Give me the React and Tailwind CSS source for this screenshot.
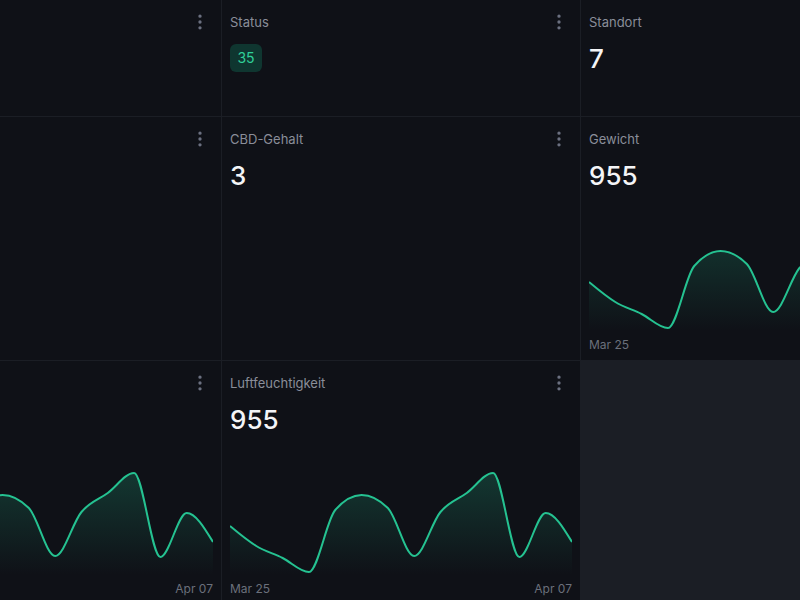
import { EllipsisVertical } from "lucide-react";

const W = 342;
const H = 145;
const BASE = 139;

// same series in every chart, y already in chart pixels
const series = [90, 110, 122, 136, 74, 59, 72, 120, 76, 57, 37, 121, 77, 106];

function monotonePath(ys) {
  const n = ys.length;
  const h = W / (n - 1);
  const xs = ys.map((_, i) => i * h);
  const s = [];
  for (let i = 0; i < n - 1; i++) s.push((ys[i + 1] - ys[i]) / h);
  const m = new Array(n).fill(0);
  for (let i = 1; i < n - 1; i++) {
    const s0 = s[i - 1];
    const s1 = s[i];
    const p = (s0 + s1) / 2;
    m[i] = (Math.sign(s0) + Math.sign(s1)) * Math.min(Math.abs(s0), Math.abs(s1), 0.5 * Math.abs(p));
  }
  m[0] = (3 * s[0] - m[1]) / 2;
  m[n - 1] = (3 * s[n - 2] - m[n - 2]) / 2;
  let d = `M${xs[0]},${ys[0]}`;
  for (let i = 0; i < n - 1; i++) {
    const dx = h / 3;
    d += ` C${xs[i] + dx},${ys[i] + m[i] * dx} ${xs[i + 1] - dx},${ys[i + 1] - m[i + 1] * dx} ${xs[i + 1]},${ys[i + 1]}`;
  }
  return d;
}

const linePath = monotonePath(series);
const areaPath = `${linePath} L${W},${BASE} L0,${BASE} Z`;

function Chart({ id, from = "Mar 25", to = "Apr 07" }) {
  return (
    <div className="flex flex-1 flex-col">
      <svg width={W} height={H} viewBox={`0 0 ${W} ${H}`} className="block">
        <defs>
          <linearGradient id={id} x1="0" y1="0" x2="0" y2="1">
            <stop offset="0%" stopColor="#22c08e" stopOpacity="0.22" />
            <stop offset="100%" stopColor="#22c08e" stopOpacity="0" />
          </linearGradient>
        </defs>
        <path d={areaPath} fill={`url(#${id})`} />
        <path d={linePath} fill="none" stroke="#25c291" strokeWidth="2" strokeLinejoin="round" />
      </svg>
      <div className="flex h-4 items-center justify-between text-xs text-[#6b707b]">
        <span>{from}</span>
        <span>{to}</span>
      </div>
    </div>
  );
}

function Widget({ title, value, badge, chart, id, from, to }) {
  return (
    <div className="flex flex-col bg-[#0f1117] px-2 pt-3 pb-[7px]">
      <div className="flex h-5 items-center justify-between">
        <span className="text-[13px] leading-5 text-[#8a8e99]">{title}</span>
        <button className="mr-[3px] flex h-5 w-5 items-center justify-center text-[#6b7080]">
          <EllipsisVertical size={20} strokeWidth={2} />
        </button>
      </div>
      {badge ? (
        <div className="mt-3">
          <span className="inline-flex h-7 w-8 items-center justify-center rounded-md bg-[#0f3630] text-sm text-[#2fcf98]">
            {badge}
          </span>
        </div>
      ) : (
        <div className="mt-[11px] h-8 text-[26px] leading-8 font-medium text-[#f4f5f7]">{value}</div>
      )}
      {chart && <Chart id={id} from={from} to={to} />}
    </div>
  );
}

export default function App() {
  return (
    <div
      className="h-[600px] w-[800px] overflow-hidden bg-[#1b1e25]"
      style={{ fontFamily: "Inter, 'Noto Sans', sans-serif" }}
    >
      {/* board is scrolled sideways: first column starts off-screen */}
      <div className="-ml-[137px] grid w-max grid-cols-[repeat(3,358px)] grid-rows-[116px_243px_243px] gap-px">
        <Widget title="" value="" />
        <Widget title="Status" badge="35" />
        <Widget title="Standort" value="7" />
        <Widget title="" value="" />
        <Widget title="CBD-Gehalt" value="3" />
        <Widget title="Gewicht" value="955" chart id="g1" to="" />
        <Widget title="" value="" chart id="g2" from="" />
        <Widget title="Luftfeuchtigkeit" value="955" chart id="g3" />
        <div />
      </div>
    </div>
  );
}
